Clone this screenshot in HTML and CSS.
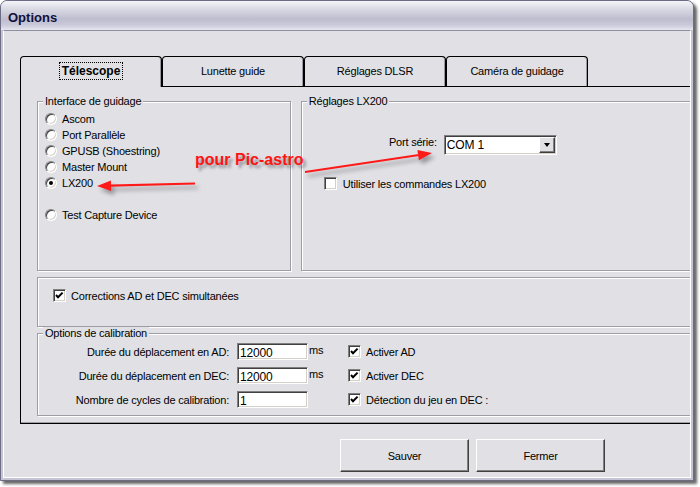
FILE: index.html
```html
<!DOCTYPE html>
<html lang="fr">
    <head>
        <meta charset="UTF-8">
        <title>Options</title>
        <link rel="stylesheet" href="styles.css">
    </head>
    <body>
        <div class="window">
            <div class="titlebar">Options</div>
            <div class="client">
                <div class="tabs">
                    <div class="tab active"><span class="focus">Télescope</span></div>
                    <div class="tab">Lunette guide</div>
                    <div class="tab">Réglages DLSR</div>
                    <div class="tab">Caméra de guidage</div>
                </div>

                <div class="panel">
                    <div class="top-row">
                        <fieldset class="group guide">
                            <legend>Interface de guidage</legend>
                            <div class="opt"><span class="radio"></span>Ascom</div>
                            <div class="opt"><span class="radio"></span>Port Parallèle</div>
                            <div class="opt"><span class="radio"></span>GPUSB (Shoestring)</div>
                            <div class="opt"><span class="radio"></span>Master Mount</div>
                            <div class="opt"><span class="radio on"></span>LX200</div>
                            <div class="opt spaced"><span class="radio"></span>Test Capture Device</div>
                        </fieldset>

                        <fieldset class="group lx">
                            <legend>Réglages LX200</legend>
                            <div class="port-row">
                                <span class="plabel">Port série:</span>
                                <div class="combo"><span>COM 1</span><span class="drop"></span></div>
                            </div>
                            <div class="copt lx-check"><span class="check"></span>Utiliser les commandes LX200</div>
                        </fieldset>
                    </div>

                    <div class="group corr">
                        <div class="copt"><span class="check"><svg viewBox="0 0 11 11"><polyline points="2,5 4,7.2 8.6,2.6"/></svg></span>Corrections AD et DEC simultanées</div>
                    </div>

                    <fieldset class="group calib">
                        <legend>Options de calibration</legend>
                        <div class="crow">
                            <span class="clabel">Durée du déplacement en AD:</span>
                            <input class="num" type="text" value="12000">
                            <span class="ms">ms</span>
                            <div class="copt"><span class="check"><svg viewBox="0 0 11 11"><polyline points="2,5 4,7.2 8.6,2.6"/></svg></span>Activer AD</div>
                        </div>
                        <div class="crow">
                            <span class="clabel">Durée du déplacement en DEC:</span>
                            <input class="num" type="text" value="12000">
                            <span class="ms">ms</span>
                            <div class="copt"><span class="check"><svg viewBox="0 0 11 11"><polyline points="2,5 4,7.2 8.6,2.6"/></svg></span>Activer DEC</div>
                        </div>
                        <div class="crow">
                            <span class="clabel">Nombre de cycles de calibration:</span>
                            <input class="num" type="text" value="1">
                            <span class="ms"></span>
                            <div class="copt"><span class="check"><svg viewBox="0 0 11 11"><polyline points="2,5 4,7.2 8.6,2.6"/></svg></span>Détection du jeu en DEC :</div>
                        </div>
                    </fieldset>
                </div>

                <div class="buttons">
                    <button class="btn">Sauver</button>
                    <button class="btn">Fermer</button>
                </div>
            </div>
        </div>

        <!-- annotations drawn over the screenshot -->
        <div class="notes">
            <svg width="700" height="487" viewBox="0 0 700 487">
                <line x1="195" y1="183.5" x2="110" y2="185.6"/>
                <polygon points="97,186 111.1,191 110.9,180.4"/>
                <line x1="305" y1="172" x2="419" y2="155"/>
                <polygon points="432,153 418.9,160.2 417.4,149.9"/>
            </svg>
            <span class="note-text">pour Pic-astro</span>
        </div>
    </body>
</html>
```

FILE: styles.css
```css
*{
    margin: 0;
    padding: 0;
    box-sizing: border-box;
}

body{
    position: relative;
    width: 700px;
    height: 487px;
    overflow: hidden;
    background: #fff;
    font-family: "Liberation Sans", Arial, sans-serif;
    font-size: 11px;
    letter-spacing: -0.2px;
    color: #000;
}

.window{
    width: 694px;
    height: 481px;
    display: flex;
    flex-direction: column;
    border: 1px solid #6c6c84;
    border-radius: 7px 7px 0 0;
    padding: 0 2px 2px 2px;
    background: #c4c4d4;
    box-shadow: 3px 3px 3px rgba(0,0,0,.6);
}

.titlebar{
    height: 29px;
    margin: 0 -2px;
    padding: 4px 0 0 7px;
    border-radius: 6px 6px 0 0;
    background: linear-gradient(#f4f4f8 0%, #dcdce6 25%, #bdbdcf 62%, #c9c9d9 82%, #e6e6ee 100%);
    font-size: 13px;
    font-weight: bold;
    letter-spacing: 0;
    line-height: 26px;
    color: #101040;
}

.client{
    flex: 1;
    overflow: hidden;
    border: 1px solid #fff;
    border-top-color: #8e8ea0;
    padding: 25px 0 0 16px;
    background: #e1e0e5;
}

/* tabs */
.tabs{
    display: flex;
    align-items: flex-start;
    height: 30px;
}

.tab{
    width: 142px;
    height: 30px;
    border: 1px solid #000;
    border-bottom: none;
    border-radius: 4px 4px 0 0;
    box-shadow: inset -1px 0 #9a9aa2;
    text-align: center;
    line-height: 28px;
    background: #e1e0e5;
}

.tab.active{
    position: relative;
    z-index: 1;
    height: 31px;
    font-size: 12px;
    font-weight: bold;
    letter-spacing: 0;
}

.focus{
    outline: 1px dotted #000;
    outline-offset: 1px;
    padding: 0 1px;
}

.panel{
    width: 690px;
    height: 338px;
    border: 1px solid #000;
    box-shadow: inset 0 -1px #a0a0a8;
    padding: 8px 0 0 16px;
}

/* group boxes */
.top-row{
    display: flex;
    gap: 10px;
    height: 176px;
}

.group{
    border: 1px solid #9d9da5;
    box-shadow: inset 1px 1px #fff, 1px 1px #fff;
    padding: 3px 5px 0 5px;
}

.group legend{
    padding: 0 2px;
    line-height: 13px;
    background: #e1e0e5;
}

.guide{
    width: 255px;
    height: 176px;
}

.lx{
    width: 410px;
    height: 176px;
}

.corr{
    width: 670px;
    height: 50px;
    margin-top: 6px;
    padding: 11px 0 0 15px;
}

.calib{
    width: 670px;
    height: 89px;
    padding-top: 3px;
}

/* radios and check boxes */
.opt{
    display: flex;
    align-items: center;
    height: 16px;
}

.opt.spaced{
    margin-top: 16px;
}

.radio{
    display: flex;
    align-items: center;
    justify-content: center;
    width: 12px;
    height: 12px;
    margin: 0 5px 0 2px;
    border: 1px solid;
    border-color: #808080 #fff #fff #808080;
    border-radius: 50%;
    box-shadow: inset 1px 1px #404040, inset -1px -1px #d4d0c8;
    background: #fff;
}

.radio.on::after{
    content: "";
    width: 4px;
    height: 4px;
    border-radius: 50%;
    background: #000;
}

.copt{
    display: flex;
    align-items: center;
    height: 13px;
}

.check{
    display: flex;
    width: 13px;
    height: 13px;
    margin-right: 5px;
    border: 1px solid;
    border-color: #808080 #fff #fff #808080;
    box-shadow: inset 1px 1px #404040, inset -1px -1px #d4d0c8;
    background: #fff;
}

.check svg{
    width: 11px;
    height: 11px;
}

.check polyline{
    fill: none;
    stroke: #000;
    stroke-width: 2;
}

/* LX200 group */
.port-row{
    display: flex;
    align-items: flex-start;
    margin-top: 24px;
}

.plabel{
    width: 130px;
    margin: 1px 7px 0 0;
    text-align: right;
    line-height: 13px;
}

.combo{
    display: flex;
    align-items: center;
    width: 113px;
    height: 20px;
    padding-left: 2px;
    border: 1px solid;
    border-color: #808080 #fff #fff #808080;
    box-shadow: inset 1px 1px #404040, inset -1px -1px #d4d0c8;
    background: #fff;
    font-size: 12px;
}

.drop{
    display: flex;
    align-items: center;
    justify-content: center;
    width: 16px;
    height: 16px;
    margin: 0 1px 0 auto;
    border: 1px solid;
    border-color: #fff #404040 #404040 #fff;
    box-shadow: inset -1px -1px #808080;
    background: #e1e0e5;
}

.drop::after{
    content: "";
    border-left: 3.5px solid transparent;
    border-right: 3.5px solid transparent;
    border-top: 4px solid #000;
}

.lx-check{
    margin: 22px 0 0 17px;
}

.lx-check .check{
    margin-right: 6px;
}

/* calibration rows */
.crow{
    display: flex;
    align-items: center;
    height: 17px;
    margin-bottom: 7px;
}

.clabel{
    width: 186px;
    margin-right: 8px;
    text-align: right;
}

.num{
    width: 71px;
    height: 17px;
    padding: 2px 0 0 2px;
    border: 1px solid;
    border-color: #808080 #fff #fff #808080;
    box-shadow: inset 1px 1px #404040, inset -1px -1px #d4d0c8;
    background: #fff;
    font-family: inherit;
    font-size: 12px;
    letter-spacing: -0.2px;
    color: #000;
    outline: none;
}

.ms{
    width: 40px;
    padding: 0 0 3px 1px;
}

/* buttons */
.buttons{
    display: flex;
    gap: 7px;
    margin-top: 15px;
    padding-left: 320px;
}

.btn{
    width: 129px;
    height: 33px;
    border: 1px solid;
    border-color: #fff #404040 #404040 #fff;
    box-shadow: inset -1px -1px #808080;
    background: #e1e0e5;
    font-family: inherit;
    font-size: 11px;
    letter-spacing: -0.2px;
    color: #000;
}

/* red annotations */
.notes{
    position: absolute;
    top: 0;
    left: 0;
    width: 700px;
    height: 487px;
    pointer-events: none;
}

.notes svg{
    filter: drop-shadow(3px 4px 2px rgba(0,0,0,.35));
}

.notes line{
    stroke: #ff1a1a;
    stroke-width: 2.2;
}

.notes polygon{
    fill: #ff1a1a;
}

.note-text{
    position: absolute;
    top: 152px;
    left: 195px;
    font-size: 16px;
    font-weight: bold;
    line-height: 16px;
    letter-spacing: 0;
    color: #ff1414;
    text-shadow: 3px 3px 3px rgba(0,0,0,.35);
}
```
